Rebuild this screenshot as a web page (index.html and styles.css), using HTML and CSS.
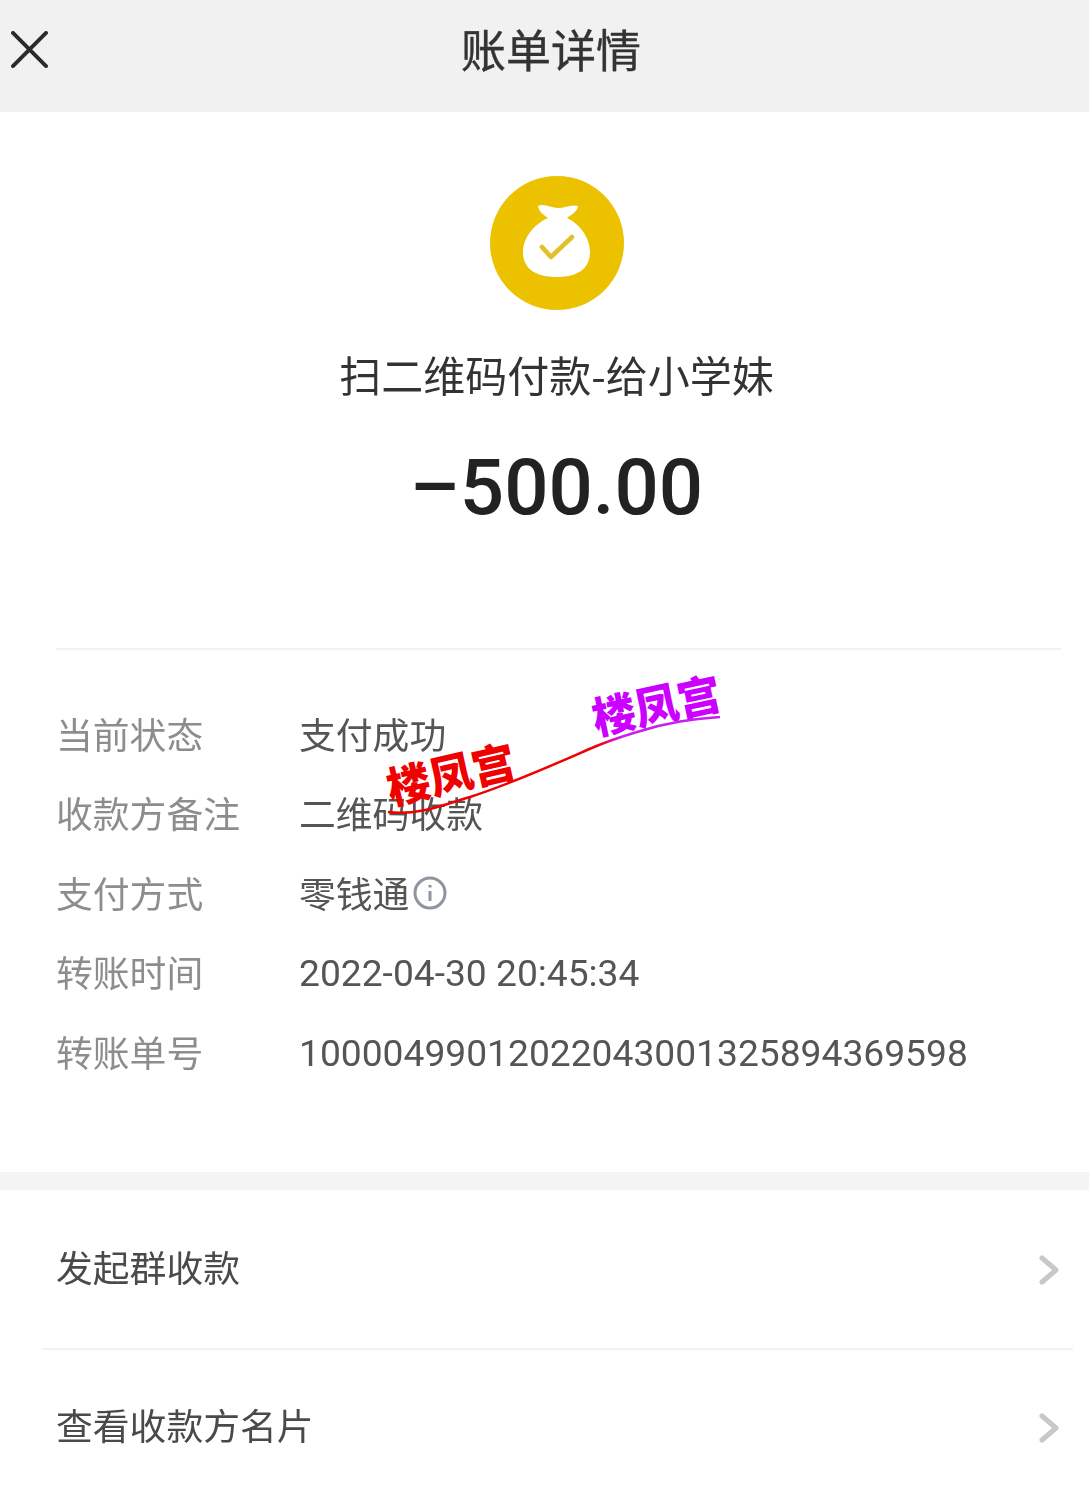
FILE: index.html
```html
<!DOCTYPE html>
<html lang="zh-CN">
<head>
<meta charset="utf-8">
<title>账单详情</title>
<link rel="stylesheet" href="styles.css">
</head>
<body>
<div class="page">
  <header class="topbar soft">
    <svg class="close" viewBox="0 0 38 38" aria-hidden="true"><path d="M2 2 L36 36 M36 2 L2 36"/></svg>
    <h1 class="title">账单详情</h1>
  </header>
  <section class="hero soft">
    <svg class="badge" viewBox="0 0 134 134" aria-hidden="true">
      <circle cx="67" cy="67" r="67" fill="#ecc100"/>
      <path fill="#fff" d="M48 30 C54 27 61 32 68 32 C75 32 81 28 88 30 C88 35 81 39 77 42 C90 48 100 62 100 76 C100 93 87 101 67 101 C46 101 33 93 33 76 C33 62 44 48 58 42 C54 39 49 36 48 30 Z"/>
      <path fill="none" stroke="#e3c02a" stroke-width="4.600" stroke-linecap="round" stroke-linejoin="round" d="M52 71 L61 81 L82 61"/>
    </svg>
    <div class="payee">扫二维码付款-给小学妹</div>
    <div class="amount">–500.00</div>
  </section>
  <section class="details soft">
    <div class="row"><span class="label">当前状态</span><span class="value">支付成功</span></div>
    <div class="row"><span class="label">收款方备注</span><span class="value">二维码收款</span></div>
    <div class="row"><span class="label">支付方式</span><span class="value">零钱通<svg class="info" viewBox="0 0 34 34" aria-hidden="true"><circle cx="17" cy="17" r="15"/><path d="M17 15 V25 M17 9 V11.500"/></svg></span></div>
    <div class="row"><span class="label">转账时间</span><span class="value number">2022-04-30 20:45:34</span></div>
    <div class="row"><span class="label">转账单号</span><span class="value number">10000499012022043001325894369598</span></div>
  </section>
  <div class="band"></div>
  <section class="links soft">
    <div class="link"><span class="link-text">发起群收款</span><svg class="chevron" viewBox="0 0 20 30" aria-hidden="true"><path d="M3 3 L17 15 L3 27"/></svg></div>
    <div class="link"><span class="link-text">查看收款方名片</span><svg class="chevron" viewBox="0 0 20 30" aria-hidden="true"><path d="M3 3 L17 15 L3 27"/></svg></div>
  </section>
  <svg class="stamp" viewBox="0 0 340 150" aria-hidden="true">
    <defs>
      <linearGradient id="swoosh" gradientUnits="userSpaceOnUse" x1="0" y1="0" x2="340" y2="0">
        <stop offset="0.62" stop-color="#f00000"/>
        <stop offset="0.68" stop-color="#c81ff0"/>
      </linearGradient>
    </defs>
    <path fill="none" stroke="url(#swoosh)" stroke-width="2.500" d="M0 137 C30 141 55 130 82 122 C125 108 165 90 199 75 C215 68 232 62 249 57 C280 47 305 44 332 42"/>
    <text class="stamp-text red" transform="translate(3 130) rotate(-13)">楼凤宫</text>
    <text class="stamp-text purple" transform="translate(208 60) rotate(-12)">楼凤宫</text>
  </svg>
</div>
</body>
</html>
```
FILE: styles.css
```css
* { box-sizing: border-box; }
html, body { margin: 0; padding: 0; background: #fff; }
.page {
  position: relative;
  width: 1089px;
  height: 1498px;
  overflow: hidden;
  font-family: "Noto Sans CJK SC", "Noto Sans", sans-serif;
  color: #4a4a4a;
}
.soft { filter: blur(0.5px); }
.topbar {
  position: relative;
  height: 112px;
  background: #f1f1f1;
  display: flex;
  align-items: center;
  justify-content: center;
  padding-bottom: 14px;
}
.close {
  position: absolute;
  left: 11px;
  top: 31px;
  width: 37px;
  height: 37px;
  fill: none;
  stroke: #2b2b2b;
  stroke-width: 4;
  stroke-linecap: round;
}
.title {
  margin: 0 0 0 13px;
  font-size: 45px;
  line-height: 1.2;
  font-weight: 400;
  color: #333;
  -webkit-text-stroke: 0.4px #333;
}
.hero {
  display: flex;
  flex-direction: column;
  align-items: center;
  margin: 0 28px 0 56px;
  padding: 64px 4px 0 0;
  height: 538px;
  border-bottom: 2px solid #f2f2f2;
}
.badge { width: 134px; height: 134px; flex: none; }
.payee {
  margin-top: 34px;
  font-size: 42px;
  line-height: 60px;
  color: #333;
  white-space: nowrap;
}
.amount {
  margin-top: 34px;
  font-family: Roboto, "Liberation Sans", sans-serif;
  font-size: 78px;
  line-height: 100px;
  font-weight: 500;
  color: #222;
  white-space: nowrap;
}
.details {
  padding: 55px 0 0 56px;
  height: 522px;
  display: flex;
  flex-direction: column;
}
.row {
  display: flex;
  height: 79.400px;
  align-items: flex-start;
  font-size: 36.800px;
  line-height: 56px;
}
.label { width: 243px; flex: none; color: #8d8d8d; }
.value { color: #555; display: flex; align-items: center; white-space: nowrap; }
.number {
  font-family: Roboto, "Liberation Sans", sans-serif;
  font-size: 37.200px;
  line-height: 60px;
}
.info {
  width: 34px;
  height: 34px;
  margin: 2px 0 0 4px;
  fill: none;
  stroke: #8d95a0;
  stroke-width: 3;
}
.band { height: 18px; background: #f4f4f4; }
.links { display: flex; flex-direction: column; }
.link {
  display: flex;
  align-items: center;
  justify-content: space-between;
  height: 153px;
  margin: 0 16px 0 42px;
  padding: 0 14px 0 14px;
  font-size: 36.800px;
  color: #4a4a4a;
}
.link:first-child { border-bottom: 2px solid #f2f2f2; height: 160px; }
.link-text { margin-bottom: 6px; }
.chevron {
  width: 20px;
  height: 30px;
  margin-top: 2px;
  fill: none;
  stroke: #c8c8c8;
  stroke-width: 5;
  stroke-linecap: round;
  stroke-linejoin: round;
}
.stamp {
  position: absolute;
  left: 388px;
  top: 675px;
  width: 340px;
  height: 150px;
  overflow: visible;
}
.stamp-text {
  font-family: "Noto Sans CJK SC", sans-serif;
  font-weight: 900;
  font-size: 43.500px;
}
.red { fill: #f00000; }
.purple { fill: #cc00ff; }
```
